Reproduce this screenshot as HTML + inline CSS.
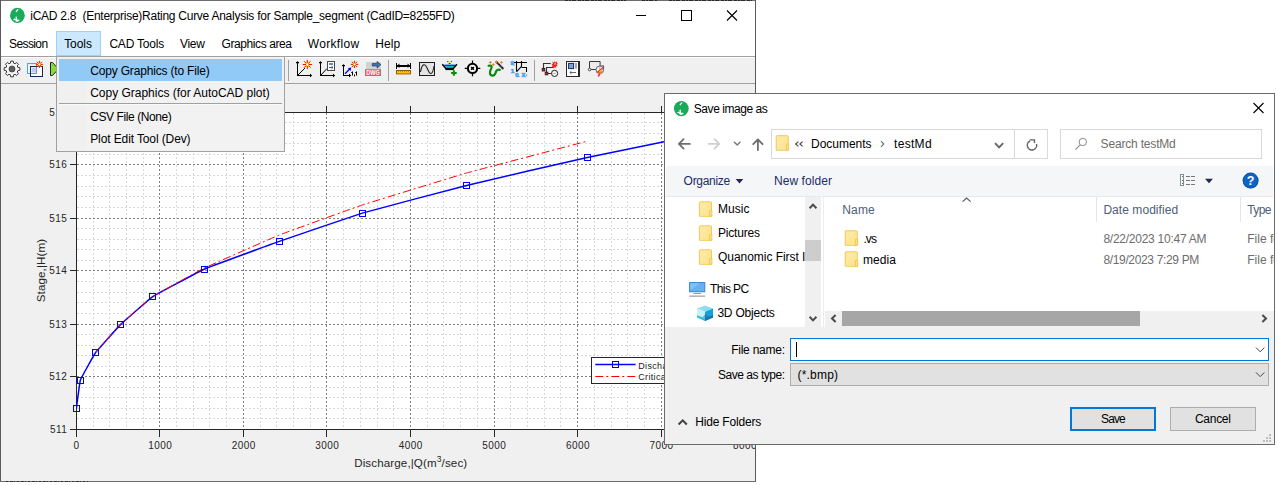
<!DOCTYPE html>
<html><head><meta charset="utf-8"><title>iCAD</title>
<style>
html,body{margin:0;padding:0;background:#fff;overflow:hidden}
svg{display:block}
text{font-family:"Liberation Sans",sans-serif;white-space:pre}
</style></head><body>
<svg width="1278" height="485" viewBox="0 0 1278 485">
<defs>
<clipPath id="cw"><rect x="0" y="0" width="756" height="482"/></clipPath>
<clipPath id="cd"><rect x="664" y="93" width="611" height="352"/></clipPath>
<clipPath id="cnav"><rect x="665" y="197" width="140" height="130"/></clipPath>
<clipPath id="cax"><rect x="76" y="112" width="671" height="319"/></clipPath>
</defs>
<rect width="1278" height="485" fill="#fff"/>

<g clip-path="url(#cw)">
<rect x="0" y="0" width="756" height="482" fill="#fff"/>
<rect x="1" y="57" width="754" height="424" fill="#f0f0f0"/>
<rect x="1" y="56" width="754" height="1" fill="#a0a0a0"/>
<rect x="1" y="83" width="754" height="1" fill="#a0a0a0"/>
<rect x="76.50" y="112.50" width="668.20" height="317.00" fill="#fff"/>
<g stroke="#d8d8d8" stroke-width="1" stroke-dasharray="2 2" fill="none" shape-rendering="crispEdges">
<path d="M93.5 112.5V429.5"/>
<path d="M109.5 112.5V429.5"/>
<path d="M126.5 112.5V429.5"/>
<path d="M143.5 112.5V429.5"/>
<path d="M176.5 112.5V429.5"/>
<path d="M193.5 112.5V429.5"/>
<path d="M209.5 112.5V429.5"/>
<path d="M226.5 112.5V429.5"/>
<path d="M260.5 112.5V429.5"/>
<path d="M276.5 112.5V429.5"/>
<path d="M293.5 112.5V429.5"/>
<path d="M310.5 112.5V429.5"/>
<path d="M343.5 112.5V429.5"/>
<path d="M360.5 112.5V429.5"/>
<path d="M377.5 112.5V429.5"/>
<path d="M393.5 112.5V429.5"/>
<path d="M427.5 112.5V429.5"/>
<path d="M443.5 112.5V429.5"/>
<path d="M460.5 112.5V429.5"/>
<path d="M477.5 112.5V429.5"/>
<path d="M510.5 112.5V429.5"/>
<path d="M527.5 112.5V429.5"/>
<path d="M544.5 112.5V429.5"/>
<path d="M560.5 112.5V429.5"/>
<path d="M594.5 112.5V429.5"/>
<path d="M611.5 112.5V429.5"/>
<path d="M627.5 112.5V429.5"/>
<path d="M644.5 112.5V429.5"/>
<path d="M677.5 112.5V429.5"/>
<path d="M694.5 112.5V429.5"/>
<path d="M711.5 112.5V429.5"/>
<path d="M727.5 112.5V429.5"/>
<path d="M76.5 418.5H744.7"/>
<path d="M76.5 408.5H744.7"/>
<path d="M76.5 397.5H744.7"/>
<path d="M76.5 387.5H744.7"/>
<path d="M76.5 366.5H744.7"/>
<path d="M76.5 355.5H744.7"/>
<path d="M76.5 345.5H744.7"/>
<path d="M76.5 334.5H744.7"/>
<path d="M76.5 313.5H744.7"/>
<path d="M76.5 302.5H744.7"/>
<path d="M76.5 292.5H744.7"/>
<path d="M76.5 281.5H744.7"/>
<path d="M76.5 260.5H744.7"/>
<path d="M76.5 249.5H744.7"/>
<path d="M76.5 239.5H744.7"/>
<path d="M76.5 228.5H744.7"/>
<path d="M76.5 207.5H744.7"/>
<path d="M76.5 196.5H744.7"/>
<path d="M76.5 186.5H744.7"/>
<path d="M76.5 175.5H744.7"/>
<path d="M76.5 154.5H744.7"/>
<path d="M76.5 143.5H744.7"/>
<path d="M76.5 133.5H744.7"/>
<path d="M76.5 122.5H744.7"/>
</g>
<g stroke="#808080" stroke-width="1" stroke-dasharray="2 2" fill="none" shape-rendering="crispEdges">
<path d="M159.5 112.5V429.5"/>
<path d="M243.5 112.5V429.5"/>
<path d="M326.5 112.5V429.5"/>
<path d="M410.5 112.5V429.5"/>
<path d="M494.5 112.5V429.5"/>
<path d="M577.5 112.5V429.5"/>
<path d="M661.5 112.5V429.5"/>
<path d="M76.5 376.5H744.7"/>
<path d="M76.5 324.5H744.7"/>
<path d="M76.5 270.5H744.7"/>
<path d="M76.5 218.5H744.7"/>
<path d="M76.5 164.5H744.7"/>
</g>
<g stroke="#262626" stroke-width="1" fill="none" shape-rendering="crispEdges">
<rect x="76.5" y="112.5" width="668" height="317.0"/>
<path d="M76.5 429.5v7M76.5 112.5v-7"/>
<path d="M159.5 429.5v7M159.5 112.5v-7"/>
<path d="M243.5 429.5v7M243.5 112.5v-7"/>
<path d="M326.5 429.5v7M326.5 112.5v-7"/>
<path d="M410.5 429.5v7M410.5 112.5v-7"/>
<path d="M494.5 429.5v7M494.5 112.5v-7"/>
<path d="M577.5 429.5v7M577.5 112.5v-7"/>
<path d="M661.5 429.5v7M661.5 112.5v-7"/>
<path d="M744.5 429.5v7M744.5 112.5v-7"/>
<path d="M76.5 429.5h-7"/>
<path d="M76.5 376.5h-7"/>
<path d="M76.5 324.5h-7"/>
<path d="M76.5 270.5h-7"/>
<path d="M76.5 218.5h-7"/>
<path d="M76.5 164.5h-7"/>
<path d="M76.5 112.5h-7"/>
</g>
<g clip-path="url(#cax)">
<path fill="none" stroke="#0000ff" stroke-width="1.5" d="M76.4 408.1C76.53 407.16 79.76 381.85 80.4 380.0C81.04 378.15 94.26 354.35 95.6 352.5C96.94 350.65 118.79 326.26 120.7 324.4C122.61 322.54 150.02 298.44 152.8 296.6C155.58 294.76 199.88 271.04 204.1 269.2C208.32 267.36 274.03 243.27 279.3 241.4C284.57 239.53 356.06 214.97 362.3 213.1C368.54 211.23 459.10 187.26 466.6 185.4C474.10 183.54 578.72 159.26 587.3 157.4C595.88 155.54 719.44 130.43 724 129.5"/>
<path fill="none" stroke="#ff0000" stroke-width="1" stroke-dasharray="8 3 2 3" d="M95.6 352.6C96.44 351.66 118.79 326.27 120.7 324.4C122.61 322.53 150.02 298.37 152.8 296.5C155.58 294.63 199.88 270.25 204.1 268.2C208.32 266.15 274.03 237.11 279.3 235.0C284.57 232.89 356.06 207.07 362.3 205.0C368.54 202.93 459.08 175.13 466.6 173.0C474.12 170.87 583.95 142.07 588 141.0"/>
</g>
<rect x="73.5" y="405.5" width="6" height="6" fill="none" stroke="#0000ff" stroke-width="1" shape-rendering="crispEdges"/>
<rect x="77.5" y="377.5" width="6" height="6" fill="none" stroke="#0000ff" stroke-width="1" shape-rendering="crispEdges"/>
<rect x="92.5" y="349.5" width="6" height="6" fill="none" stroke="#0000ff" stroke-width="1" shape-rendering="crispEdges"/>
<rect x="117.5" y="321.5" width="6" height="6" fill="none" stroke="#0000ff" stroke-width="1" shape-rendering="crispEdges"/>
<rect x="149.5" y="293.5" width="6" height="6" fill="none" stroke="#0000ff" stroke-width="1" shape-rendering="crispEdges"/>
<rect x="201.5" y="266.5" width="6" height="6" fill="none" stroke="#0000ff" stroke-width="1" shape-rendering="crispEdges"/>
<rect x="276.5" y="238.5" width="6" height="6" fill="none" stroke="#0000ff" stroke-width="1" shape-rendering="crispEdges"/>
<rect x="359.5" y="210.5" width="6" height="6" fill="none" stroke="#0000ff" stroke-width="1" shape-rendering="crispEdges"/>
<rect x="463.5" y="182.5" width="6" height="6" fill="none" stroke="#0000ff" stroke-width="1" shape-rendering="crispEdges"/>
<rect x="584.5" y="154.5" width="6" height="6" fill="none" stroke="#0000ff" stroke-width="1" shape-rendering="crispEdges"/>
<rect x="591.5" y="357.5" width="140" height="26" fill="#fff" stroke="#262626" stroke-width="1" shape-rendering="crispEdges"/>
<path d="M595.3 364.5H635.6" stroke="#0000ff" stroke-width="1.3"/>
<rect x="612.5" y="361.5" width="6" height="6" fill="none" stroke="#0000ff" shape-rendering="crispEdges"/>
<path d="M595.3 376.5H635.6" stroke="#ff0000" stroke-width="1.15" stroke-dasharray="8 3 2 3"/>
<text x="638.20" y="368.60" font-size="9" fill="#1a1a1a" text-anchor="start" letter-spacing="0.35">Discharge</text>
<text x="638.20" y="379.80" font-size="9" fill="#1a1a1a" text-anchor="start" letter-spacing="0.35">Critical</text>
<text x="67.30" y="433.20" font-size="10" fill="#262626" text-anchor="end" letter-spacing="0.45">511</text>
<text x="67.30" y="380.20" font-size="10" fill="#262626" text-anchor="end" letter-spacing="0.45">512</text>
<text x="67.30" y="328.20" font-size="10" fill="#262626" text-anchor="end" letter-spacing="0.45">513</text>
<text x="67.30" y="274.20" font-size="10" fill="#262626" text-anchor="end" letter-spacing="0.45">514</text>
<text x="67.30" y="222.20" font-size="10" fill="#262626" text-anchor="end" letter-spacing="0.45">515</text>
<text x="67.30" y="168.20" font-size="10" fill="#262626" text-anchor="end" letter-spacing="0.45">516</text>
<text x="67.30" y="116.20" font-size="10" fill="#262626" text-anchor="end" letter-spacing="0.45">517</text>
<text x="76.60" y="448.50" font-size="10" fill="#262626" text-anchor="middle" letter-spacing="0.45">0</text>
<text x="160.15" y="448.50" font-size="10" fill="#262626" text-anchor="middle" letter-spacing="0.45">1000</text>
<text x="243.70" y="448.50" font-size="10" fill="#262626" text-anchor="middle" letter-spacing="0.45">2000</text>
<text x="327.25" y="448.50" font-size="10" fill="#262626" text-anchor="middle" letter-spacing="0.45">3000</text>
<text x="410.80" y="448.50" font-size="10" fill="#262626" text-anchor="middle" letter-spacing="0.45">4000</text>
<text x="494.35" y="448.50" font-size="10" fill="#262626" text-anchor="middle" letter-spacing="0.45">5000</text>
<text x="577.90" y="448.50" font-size="10" fill="#262626" text-anchor="middle" letter-spacing="0.45">6000</text>
<text x="661.45" y="448.50" font-size="10" fill="#262626" text-anchor="middle" letter-spacing="0.45">7000</text>
<text x="745.00" y="448.50" font-size="10" fill="#262626" text-anchor="middle" letter-spacing="0.45">8000</text>
<text x="354.2" y="466.6" font-size="11.6" fill="#262626" textLength="113" lengthAdjust="spacing">Discharge,|Q(m<tspan font-size="8.5" dy="-4.5">3</tspan><tspan dy="4.5">/sec)</tspan></text>
<text transform="translate(45.2 302.3) rotate(-90)" font-size="11.6" fill="#262626" textLength="63.5" lengthAdjust="spacing">Stage,|H(m)</text>
<rect x="1" y="1" width="754" height="55" fill="#fff"/>
<g transform="translate(17.4 15.4)"><ellipse rx="7.3999999999999995" ry="7.699999999999999" fill="#1ba95a"/><path d="M0.2 -6.4L1.2 -5.9L-0.9 -3.2L-1.9 -3.8Z" fill="#fff"/><path d="M-4.2 4L-2.4 2.8L-1.4 4.2L-2 1.4L-0.6 1L0 4.6L1.6 4L2.4 4.8L0.2 6.4L-1.4 6L-2.6 4.4L-3.6 5Z" fill="#fff"/></g>
<text x="30.30" y="20.00" font-size="12" fill="#000" text-anchor="start" textLength="424.50" lengthAdjust="spacing" >iCAD 2.8  (Enterprise)Rating Curve Analysis for Sample_segment (CadID=8255FD)</text>
<g stroke="#000" stroke-width="1" fill="none" shape-rendering="crispEdges"><path d="M636 15.5h10"/><rect x="681.5" y="10.5" width="10" height="10"/></g>
<path d="M727 10.5l10 10M737 10.5l-10 10" stroke="#000" stroke-width="1.1" fill="none"/>
<rect x="56.5" y="31.5" width="44" height="24" fill="#cce8ff" stroke="#99d1ff" shape-rendering="crispEdges"/>
<text x="9.00" y="48.00" font-size="12" fill="#000" text-anchor="start" textLength="39.10" lengthAdjust="spacing" >Session</text>
<text x="64.20" y="48.00" font-size="12" fill="#000" text-anchor="start" textLength="27.70" lengthAdjust="spacing" >Tools</text>
<text x="109.40" y="48.00" font-size="12" fill="#000" text-anchor="start" textLength="54.80" lengthAdjust="spacing" >CAD Tools</text>
<text x="180.00" y="48.00" font-size="12" fill="#000" text-anchor="start" textLength="24.80" lengthAdjust="spacing" >View</text>
<text x="221.60" y="48.00" font-size="12" fill="#000" text-anchor="start" textLength="70.30" lengthAdjust="spacing" >Graphics area</text>
<text x="307.70" y="48.00" font-size="12" fill="#000" text-anchor="start" textLength="51.50" lengthAdjust="spacing" >Workflow</text>
<text x="375.20" y="48.00" font-size="12" fill="#000" text-anchor="start" textLength="25.00" lengthAdjust="spacing" >Help</text>
<g fill="#a0a0a0" shape-rendering="crispEdges"><rect x="288" y="60" width="1" height="21"/><rect x="388" y="60" width="1" height="21"/><rect x="534" y="60" width="1" height="21"/></g>
<rect x="1" y="57" width="754" height="1" fill="#fff"/>
<path d="M19.90 67.75L19.90 70.25L17.90 70.56L17.27 72.06L18.47 73.70L16.70 75.47L15.06 74.27L13.56 74.90L13.25 76.90L10.75 76.90L10.44 74.90L8.94 74.27L7.30 75.47L5.53 73.70L6.73 72.06L6.10 70.56L4.10 70.25L4.10 67.75L6.10 67.44L6.73 65.94L5.53 64.30L7.30 62.53L8.94 63.73L10.44 63.10L10.75 61.10L13.25 61.10L13.56 63.10L15.06 63.73L16.70 62.53L18.47 64.30L17.27 65.94L17.90 67.44Z" fill="#f6f6f6" stroke="#3a3a3a" stroke-width="1" stroke-linejoin="round"/>
<circle cx="12" cy="69" r="3" fill="#5e5e5e" stroke="#3c3c3c" stroke-width="0.8"/>
<rect x="30.5" y="66.5" width="12" height="10" fill="#fff" stroke="#16244e" shape-rendering="crispEdges"/>
<rect x="31" y="67" width="11" height="2" fill="#16244e" opacity="0.0"/>
<rect x="31.5" y="67.5" width="5" height="5" fill="#c2c9f2"/>
<rect x="27.5" y="63.5" width="9" height="10" fill="none" stroke="#4aa3ff" shape-rendering="crispEdges"/>
<rect x="31" y="66" width="6" height="1" fill="#16244e"/><rect x="30" y="66" width="1" height="8" fill="#16244e"/>
<circle cx="39.4" cy="64.4" r="2.23" fill="#ffff00"/><path d="M40.48 64.40L43.00 64.40M40.16 65.16L41.95 66.95M39.40 65.48L39.40 68.00M38.64 65.16L36.85 66.95M38.32 64.40L35.80 64.40M38.64 63.64L36.85 61.85M39.40 63.32L39.40 60.80M40.16 63.64L41.95 61.85" stroke="#ff0000" stroke-width="0.9" fill="none"/><circle cx="39.4" cy="64.4" r="0.79" fill="#fff"/>
<path d="M50.5 62.5h2l6 6.5l-6 6.5h-2z" fill="#86dc3a" stroke="#1e2a12" stroke-width="1"/>
<g fill="#000" shape-rendering="crispEdges"><rect x="297" y="62" width="1" height="14"/><rect x="296" y="62" width="3" height="1"/><rect x="297" y="75" width="14" height="1"/><rect x="310" y="74" width="1" height="3"/></g><path d="M297.5 61l-1.6 2.2h3.2zM312.2 75.5l-2.2-1.8v3.6z" fill="#000"/>
<path d="M298 75L306 67" stroke="#000" stroke-width="1"/>
<circle cx="307.3" cy="64.5" r="4.6" fill="#e6fbfb"/><circle cx="307.3" cy="64.5" r="2.85" fill="#ffff00"/><path d="M308.68 64.50L311.90 64.50M308.28 65.48L310.55 67.75M307.30 65.88L307.30 69.10M306.32 65.48L304.05 67.75M305.92 64.50L302.70 64.50M306.32 63.52L304.05 61.25M307.30 63.12L307.30 59.90M308.28 63.52L310.55 61.25" stroke="#ff0000" stroke-width="1.0" fill="none"/><circle cx="307.3" cy="64.5" r="1.01" fill="#fff"/>
<g fill="#000" shape-rendering="crispEdges"><rect x="320" y="62" width="1" height="14"/><rect x="319" y="62" width="3" height="1"/><rect x="320" y="75" width="14" height="1"/><rect x="333" y="74" width="1" height="3"/></g><path d="M320.5 61l-1.6 2.2h3.2zM335.2 75.5l-2.2-1.8v3.6z" fill="#000"/>
<path d="M321 75L327 68.5" stroke="#000" stroke-width="1"/>
<rect x="327.5" y="61.5" width="7" height="9" fill="#fff" stroke="#4a4a4a" shape-rendering="crispEdges"/>
<rect x="329" y="63" width="4" height="2" fill="#5d8dd2"/>
<path d="M329 67.5h3.6M331.4 66l1.6 1.5l-1.6 1.5" stroke="#333" stroke-width="0.8" fill="none"/>
<g fill="#000" shape-rendering="crispEdges"><rect x="343" y="65" width="1" height="11"/><rect x="342" y="65" width="3" height="1"/><rect x="343" y="75" width="7" height="1"/><rect x="349" y="74" width="1" height="3"/></g><path d="M343.5 64l-1.6 2.2h3.2zM351.2 75.5l-2.2-1.8v3.6z" fill="#000"/>
<path d="M345 73.8L350 68.8" stroke="#0000ff" stroke-width="1.3"/><path d="M351.2 67.6l-3.4 0.6l2.8 2.8z" fill="#0000ff"/>
<circle cx="354.5" cy="64.4" r="3.7" fill="#b9f1f7"/><circle cx="354.5" cy="64.4" r="2.29" fill="#ffff00"/><path d="M355.61 64.40L358.20 64.40M355.28 65.18L357.12 67.02M354.50 65.51L354.50 68.10M353.72 65.18L351.88 67.02M353.39 64.40L350.80 64.40M353.72 63.62L351.88 61.78M354.50 63.29L354.50 60.70M355.28 63.62L357.12 61.78" stroke="#ff0000" stroke-width="0.9" fill="none"/><circle cx="354.5" cy="64.4" r="0.81" fill="#fff"/>
<g fill="#000"><rect x="352" y="71.5" width="1" height="4"/><rect x="351.3" y="72" width="1" height="1"/><rect x="356" y="71.5" width="1" height="4"/><rect x="355.3" y="72" width="1" height="1"/><path d="M354 74.6h1v1.2l-1 1.2z"/></g>
<rect x="366" y="62" width="15" height="7" fill="#d2d2d2"/>
<path d="M372.3 63.4h4.8v-2l3.8 3.3l-3.8 3.3v-2h-4.8z" fill="#3f74b4" stroke="#1d3a66" stroke-width="0.7"/>
<rect x="365" y="69.2" width="16" height="6.8" fill="#e2566a"/>
<text x="373" y="75.2" font-size="6.6" font-weight="bold" fill="#fff" text-anchor="middle" textLength="13.6" lengthAdjust="spacingAndGlyphs">DWG</text>
<g fill="#000" shape-rendering="crispEdges"><rect x="396" y="63" width="1" height="6"/><rect x="410" y="63" width="1" height="6"/><rect x="397" y="65" width="13" height="1.5"/></g>
<path d="M397 65.8l2.4-2.2v4.4zM410 65.8l-2.4-2.2v4.4z" fill="#000"/>
<rect x="396.5" y="70.5" width="14" height="3.4" fill="#ffc61a" stroke="#9c5a00" stroke-width="1"/>
<path d="M398.5 71v1.2M400.5 71v1.2M402.5 71v1.2M404.5 71v1.2M406.5 71v1.2M408.5 71v1.2" stroke="#b37400" stroke-width="0.7"/>
<rect x="419.5" y="62.5" width="15" height="13" fill="#e4e4e4" stroke="#1c1c1c" shape-rendering="crispEdges"/>
<path d="M420.5 72C422 63 425 63 427.5 69S432.5 76 434 66" stroke="#222" stroke-width="1.1" fill="none"/>
<path d="M444.6 65.2h10.2l-2 2.8h-6.2z" fill="#00b4d8"/><rect x="444.4" y="64.6" width="10.6" height="1.4" fill="#0038ff"/>
<path d="M442.3 64.2l4 4.8h6.6l4-4.8" stroke="#000" stroke-width="1.5" fill="none"/><path d="M445.6 69h8" stroke="#000" stroke-width="2.2"/>
<path d="M448.4 61.2l1.2 1.4l1.2-1.4M449.6 62.4v1.8" stroke="#ffee00" stroke-width="1.2" fill="none"/><circle cx="447.7" cy="61.6" r="0.7" fill="#0030ff"/><circle cx="451.5" cy="61.6" r="0.7" fill="#0030ff"/><path d="M448.6 63.6h2" stroke="#0030ff" stroke-width="1"/>
<path d="M453.9 70v6M450.9 73h6" stroke="#e9f25a" stroke-width="2.6" opacity="0.6"/><path d="M453.9 70.2v5.6M451.1 73h5.6" stroke="#0b8a0b" stroke-width="1.9"/>
<circle cx="472.5" cy="68.4" r="4.6" fill="#fafafa" stroke="#000" stroke-width="2.1"/>
<path d="M472.5 60.6v3M472.5 73.2v3M464.7 68.4h3M477.3 68.4h3" stroke="#000" stroke-width="1.2"/>
<path d="M471.1 67l2.8 2.8M473.9 67l-2.8 2.8" stroke="#000" stroke-width="1.6"/>
<path d="M488.6 65.8C491.6 65 492.4 66.6 491 69C489.2 72 489.6 75.6 492.6 75.6C495.6 75.6 495.4 72.4 496.4 70.8C497.2 69.6 498.6 69.6 499.8 69.8" stroke="#0a8a0a" stroke-width="2.2" fill="none" stroke-linecap="round"/>
<path d="M490.3 60.8l0.6 1l1 0.6l-1 0.6l-0.6 1l-0.6-1l-1-0.6l1-0.6z" fill="#e07a1a"/>
<path d="M493.4 62.99999999999999l0.6 1l1 0.6l-1 0.6l-0.6 1l-0.6-1l-1-0.6l1-0.6z" fill="#e07a1a"/>
<path d="M501.4 60.8l0.6 1l1 0.6l-1 0.6l-0.6 1l-0.6-1l-1-0.6l1-0.6z" fill="#e07a1a"/>
<path d="M496.6 62.2L503.4 69" stroke="#111" stroke-width="1.9"/><path d="M497.6 63.2L503.2 68.8" stroke="#fff" stroke-width="0.6" stroke-dasharray="0.7 0.7"/><circle cx="496.5" cy="62.1" r="1" fill="#ffe400" stroke="#8a1010" stroke-width="0.6"/>
<path d="M516.5 61v10.8M514 62.5h13M521.5 61v5.4L516.7 71.6M521.6 67.5h5.4M526.5 67.5v4.6" stroke="#000" stroke-width="1.1" fill="none"/>
<g font-size="6" font-weight="bold" fill="#3d9eff" stroke="#3d9eff" stroke-width="0.5"><text x="510.6" y="65.4">9</text><text x="510.8" y="72.8">1</text><text x="515.2" y="77.4">0</text><text x="521.6" y="77" font-size="7">x</text></g>
<g fill="#8a8a8a" opacity="0.7"><rect x="513.2" y="64.4" width="1.6" height="1.2"/><rect x="513.4" y="71.8" width="1.4" height="1"/><rect x="518" y="76" width="1.8" height="1"/><rect x="526" y="74" width="1.2" height="2.4"/></g>
<path d="M543.5 69v-5.5h7.2M546.5 73v-5.5h6.6M547.5 73.5h4" stroke="#333" stroke-width="1.1" fill="none"/>
<rect x="542.2" y="68.4" width="2.6" height="2.6" fill="#ff1010" stroke="#222" stroke-width="0.9"/><rect x="545.2" y="72.2" width="2.6" height="2.6" fill="#ff1010" stroke="#222" stroke-width="0.9"/>
<circle cx="554.6" cy="73.4" r="3.1" fill="#f4f4f4" stroke="#222" stroke-width="1"/><path d="M552.6 73.4h3.4" stroke="#bbb" stroke-width="1"/>
<path d="M552.2 61.4l1.4 1l1-1.2l0.8 1.2l1.8-1.2l-0.4 1.8l1.2 0.8l-1.4 0.8l1 1.4l-1.6 0.2l0.2 1.6l-1.6-0.6l-1 1.4l-0.6-1.6l-1.2 0.2l0.8-1.6l-1-1l1.4-0.8z" fill="#ff1a1a"/><path d="M554.4 62.8l0.8 1.6M555.8 63l-1.4 2.2" stroke="#fff" stroke-width="0.5"/>
<rect x="566.5" y="61.5" width="13" height="15" fill="#fff" stroke="#2a2a2a" shape-rendering="crispEdges"/><rect x="578" y="61" width="2" height="16" fill="#2a2a2a"/>
<rect x="568.6" y="63.4" width="5" height="5.2" fill="#7ea2da" stroke="#182c66" stroke-width="1"/>
<rect x="575" y="63" width="2" height="5.6" fill="#a8a8a8"/>
<path d="M570 72.5h6M571.4 71.2l-1.6 1.3l1.6 1.3" stroke="#555" stroke-width="0.9" fill="none"/>
<path d="M589.5 68.4v-6.9h10.6v5" stroke="#3a3a3a" stroke-width="1" fill="#ececec"/><path d="M590.6 69.5h5.4" stroke="#3a3a3a" stroke-width="1"/>
<circle cx="589.6" cy="69.5" r="1.3" fill="#fff" stroke="#333" stroke-width="0.9"/>
<circle cx="599.8" cy="69.8" r="3.8" fill="#f2f2f2" stroke="#666" stroke-width="1"/><path d="M599.8 66.4v3.4" stroke="#999" stroke-width="0.8"/><path d="M601.4 65.8h2.2v3" stroke="#444" stroke-width="0.9" fill="none"/>
<path d="M602.6 68.4l-4.2 3.4h2.8l-3 4.6" stroke="#ff1a1a" stroke-width="1.6" fill="none"/><path d="M601.8 69.4l-2.6 2.2h2.4l-1.8 2.6" stroke="#ffe100" stroke-width="0.8" fill="none"/>
<rect x="56.5" y="56.5" width="228" height="95" fill="#f2f2f2" stroke="#a0a0a0" shape-rendering="crispEdges"/>
<rect x="57" y="57" width="29.6" height="94" fill="#f0f0f0"/>
<rect x="59" y="59" width="223" height="22" fill="#91c9f7"/>
<rect x="59" y="103" width="223" height="1" fill="#a0a0a0"/><rect x="59" y="104" width="223" height="1" fill="#fafafa"/>
<text x="90.20" y="74.60" font-size="12" fill="#000" text-anchor="start" textLength="119.50" lengthAdjust="spacing" >Copy Graphics (to File)</text>
<text x="90.20" y="96.60" font-size="12" fill="#000" text-anchor="start" textLength="179.60" lengthAdjust="spacing" >Copy Graphics (for AutoCAD plot)</text>
<text x="90.20" y="120.70" font-size="12" fill="#000" text-anchor="start" textLength="81.60" lengthAdjust="spacing" >CSV File (None)</text>
<text x="90.20" y="142.60" font-size="12" fill="#000" text-anchor="start" textLength="100.40" lengthAdjust="spacing" >Plot Edit Tool (Dev)</text>
<rect x="0" y="0" width="756" height="1" fill="#6d6d6d"/><rect x="0" y="0" width="1" height="482" fill="#5a5a5a"/><rect x="755" y="0" width="1" height="482" fill="#5a5a5a"/><rect x="0" y="481" width="756" height="1" fill="#6d6d6d"/>
<path d="M565 0.5H626M642 0.5H657M669 0.5H752" stroke="#2a2a2a" stroke-dasharray="3 1 2 1 4 2" shape-rendering="crispEdges"/>
<path d="M6 481.5H88" stroke="#333" stroke-dasharray="2 2 3 1 1 2" shape-rendering="crispEdges"/>
</g>
<g clip-path="url(#cd)">
<rect x="664" y="93" width="611" height="352" fill="#fff"/>
<g transform="translate(681.3 108.6)"><ellipse rx="7.3999999999999995" ry="7.699999999999999" fill="#1ba95a"/><path d="M0.2 -6.4L1.2 -5.9L-0.9 -3.2L-1.9 -3.8Z" fill="#fff"/><path d="M-4.2 4L-2.4 2.8L-1.4 4.2L-2 1.4L-0.6 1L0 4.6L1.6 4L2.4 4.8L0.2 6.4L-1.4 6L-2.6 4.4L-3.6 5Z" fill="#fff"/></g>
<text x="693.80" y="113.00" font-size="12" fill="#000" text-anchor="start" textLength="74.00" lengthAdjust="spacing" >Save image as</text>
<path d="M1253.5 103l10 10M1263.5 103l-10 10" stroke="#000" stroke-width="1.1" fill="none"/>
<g stroke="#6e6e6e" stroke-width="1.8" fill="none" stroke-linecap="round" stroke-linejoin="round"><path d="M679 143.9H689.8M683.6 139.2L678.9 143.9L683.6 148.6"/></g>
<g stroke="#cfcfcf" stroke-width="1.8" fill="none" stroke-linecap="round" stroke-linejoin="round"><path d="M708.6 143.9H719.2M714.6 139.2L719.3 143.9L714.6 148.6"/></g>
<path d="M734.4 142.2l2.8 2.8l2.8-2.8" stroke="#7a7a7a" stroke-width="1.5" fill="none" stroke-linecap="round" stroke-linejoin="round"/>
<g stroke="#6e6e6e" stroke-width="1.8" fill="none" stroke-linecap="round" stroke-linejoin="round"><path d="M757.9 139.6V150M753.2 144.2L757.9 139.5L762.6 144.2"/></g>
<rect x="771.5" y="129.5" width="276" height="29" fill="#fff" stroke="#d9d9d9" shape-rendering="crispEdges"/>
<rect x="1014" y="130" width="1" height="28" fill="#d9d9d9"/>
<g transform="translate(775.6 135.2)"><path d="M0.6 1.3Q0.6 0.5 1.4 0.5H11.8Q12.7 0.5 12.7 1.4V15H0.6Z" fill="#ffe9a2" stroke="#eec24e" stroke-width="0.9"/><path d="M1.4 14.2L10.2 1.2H11.9V14.2Z" fill="#ffe38c" opacity="0.55"/><path d="M10.7 9.4Q10.7 8.9 11.2 8.9H12.6Q13.1 8.9 13.1 9.4V15H10.7Z" fill="#fde089" stroke="#eec24e" stroke-width="0.8"/></g>
<path d="M798.4 141.6l-2.7 2.4l2.7 2.4M802.6 141.6l-2.7 2.4l2.7 2.4" stroke="#4a4a4a" stroke-width="1.2" fill="none"/>
<text x="811.00" y="148.00" font-size="12" fill="#000" text-anchor="start" textLength="60.60" lengthAdjust="spacing" >Documents</text>
<path d="M881 141.2l2.8 2.8l-2.8 2.8" stroke="#6a6a6a" stroke-width="1.1" fill="none"/>
<text x="894.00" y="148.00" font-size="12" fill="#000" text-anchor="start" textLength="37.60" lengthAdjust="spacing" >testMd</text>
<path d="M995 143.2l4.1 4.1l4.1-4.1" stroke="#666" stroke-width="1.9" fill="none"/>
<path d="M1036.5 144A4.7 4.7 0 1 1 1030 141" stroke="#666" stroke-width="1.5" fill="none"/><path d="M1029.6 139.9h4.9v3.2" stroke="#666" stroke-width="1.4" fill="none"/>
<rect x="1060.5" y="129.5" width="201" height="29" fill="#fff" stroke="#d9d9d9" shape-rendering="crispEdges"/>
<circle cx="1082.8" cy="142" r="3.7" stroke="#8a8a8a" stroke-width="1" fill="none"/><path d="M1080.2 144.8l-4.8 4.8" stroke="#8a8a8a" stroke-width="1.1"/>
<text x="1100.60" y="148.00" font-size="12" fill="#6d6d6d" text-anchor="start" textLength="75.20" lengthAdjust="spacing" >Search testMd</text>
<rect x="666" y="166" width="607" height="30" fill="#f5f6f7"/><rect x="666" y="196" width="607" height="1" fill="#e8e9ea"/>
<text x="683.60" y="184.70" font-size="12" fill="#1a2c6a" text-anchor="start" textLength="46.60" lengthAdjust="spacing" >Organize</text>
<path d="M735.7 179.1h7.6l-3.8 4.3z" fill="#1e2b4f"/>
<text x="774.00" y="184.70" font-size="12" fill="#1a2c6a" text-anchor="start" textLength="58.00" lengthAdjust="spacing" >New folder</text>
<g shape-rendering="crispEdges"><rect x="1180.5" y="174.5" width="3" height="11" fill="#fff" stroke="#8a8a8a"/><rect x="1181.5" y="176" width="1" height="1" fill="#3b78c4"/><rect x="1181.5" y="179.5" width="1" height="1" fill="#3b78c4"/><rect x="1181.5" y="183" width="1" height="1" fill="#d03030"/><g fill="#777"><rect x="1186" y="176" width="4" height="1"/><rect x="1191" y="176" width="4" height="1"/><rect x="1186" y="180" width="4" height="1"/><rect x="1191" y="180" width="4" height="1"/><rect x="1186" y="184" width="4" height="1"/><rect x="1191" y="184" width="4" height="1"/></g></g>
<path d="M1205 178.8h8l-4 4.4z" fill="#1e2b4f"/>
<circle cx="1250.6" cy="180.6" r="8" fill="#0e63c4"/><circle cx="1250.6" cy="180.6" r="7.3" fill="none" stroke="#0a4e9e" stroke-width="0.6"/>
<text x="1250.6" y="185.2" font-size="12.5" font-weight="bold" fill="#fff" text-anchor="middle">?</text>
<g clip-path="url(#cnav)">
<g transform="translate(698.8 201.3)"><path d="M0.6 1.3Q0.6 0.5 1.4 0.5H11.8Q12.7 0.5 12.7 1.4V15H0.6Z" fill="#ffe9a2" stroke="#eec24e" stroke-width="0.9"/><path d="M1.4 14.2L10.2 1.2H11.9V14.2Z" fill="#ffe38c" opacity="0.55"/><path d="M10.7 9.4Q10.7 8.9 11.2 8.9H12.6Q13.1 8.9 13.1 9.4V15H10.7Z" fill="#fde089" stroke="#eec24e" stroke-width="0.8"/></g>
<text x="718.00" y="213.00" font-size="12" fill="#000" text-anchor="start" textLength="31.40" lengthAdjust="spacing" >Music</text>
<g transform="translate(698.8 225.3)"><path d="M0.6 1.3Q0.6 0.5 1.4 0.5H11.8Q12.7 0.5 12.7 1.4V15H0.6Z" fill="#ffe9a2" stroke="#eec24e" stroke-width="0.9"/><path d="M1.4 14.2L10.2 1.2H11.9V14.2Z" fill="#ffe38c" opacity="0.55"/><path d="M10.7 9.4Q10.7 8.9 11.2 8.9H12.6Q13.1 8.9 13.1 9.4V15H10.7Z" fill="#fde089" stroke="#eec24e" stroke-width="0.8"/></g>
<text x="718.00" y="237.00" font-size="12" fill="#000" text-anchor="start" textLength="41.90" lengthAdjust="spacing" >Pictures</text>
<g transform="translate(698.8 249.3)"><path d="M0.6 1.3Q0.6 0.5 1.4 0.5H11.8Q12.7 0.5 12.7 1.4V15H0.6Z" fill="#ffe9a2" stroke="#eec24e" stroke-width="0.9"/><path d="M1.4 14.2L10.2 1.2H11.9V14.2Z" fill="#ffe38c" opacity="0.55"/><path d="M10.7 9.4Q10.7 8.9 11.2 8.9H12.6Q13.1 8.9 13.1 9.4V15H10.7Z" fill="#fde089" stroke="#eec24e" stroke-width="0.8"/></g>
<text x="718.00" y="261.00" font-size="12" fill="#000" text-anchor="start" textLength="100.00" lengthAdjust="spacing" >Quanomic First Inc</text>
<g><rect x="689.6" y="282.6" width="15.2" height="9.2" fill="#62b2ee" stroke="#2e7fc4" stroke-width="0.9"/><path d="M690.2 283.2h9.5l-9.5 7z" fill="#8ccaf5" opacity="0.7"/><rect x="693.4" y="293.1" width="7.6" height="0.9" fill="#8a8f94"/><rect x="689.2" y="295.5" width="16" height="1.3" fill="#a2a6aa"/></g>
<text x="710.00" y="292.60" font-size="12" fill="#000" text-anchor="start" textLength="39.10" lengthAdjust="spacing" >This PC</text>
<g><path d="M697 308.6L705 305.4L713 308.6L705 311.8Z" fill="#8fdcee"/><path d="M697 308.6L705 311.8V320.9L697 317.6Z" fill="#c8f0f7"/><path d="M713 308.6L705 311.8V320.9L713 317.6Z" fill="#14a2d6"/><path d="M697 315.2L705 318.2V320.9L697 317.6Z" fill="#39bcd6"/><path d="M713 315.2L705 318.2V320.9L713 317.6Z" fill="#1674b4"/><path d="M705 314.5L709.5 316.4L705 318.3L702.6 317.2Z" fill="#1a6fae" opacity="0.55"/></g>
<text x="717.40" y="317.00" font-size="12" fill="#000" text-anchor="start" textLength="57.40" lengthAdjust="spacing" >3D Objects</text>
</g>
<rect x="805" y="197" width="16" height="130" fill="#f0f0f0"/>
<rect x="805" y="240" width="16" height="21" fill="#cdcdcd"/>
<path d="M809.6 208.2l3.4-3.6l3.4 3.6" stroke="#4a4a4a" stroke-width="2" fill="none"/>
<path d="M809.6 316.8l3.4 3.6l3.4-3.6" stroke="#4a4a4a" stroke-width="2" fill="none"/>
<rect x="823" y="197" width="1" height="130" fill="#ededed"/>
<path d="M962.6 201.7l4-3.7l4 3.7" stroke="#555" stroke-width="1.1" fill="none"/>
<text x="842.20" y="214.00" font-size="12" fill="#4c607a" text-anchor="start" textLength="32.60" lengthAdjust="spacing" >Name</text>
<rect x="1096" y="197" width="1" height="25" fill="#e5e5e5"/><rect x="1240" y="197" width="1" height="25" fill="#e5e5e5"/>
<text x="1103.40" y="214.00" font-size="12" fill="#4c607a" text-anchor="start" textLength="74.70" lengthAdjust="spacing" >Date modified</text>
<text x="1247.20" y="214.00" font-size="12" fill="#4c607a" text-anchor="start" textLength="24.20" lengthAdjust="spacing" >Type</text>
<g transform="translate(844.6 230.3)"><path d="M0.6 1.3Q0.6 0.5 1.4 0.5H11.8Q12.7 0.5 12.7 1.4V15H0.6Z" fill="#ffe9a2" stroke="#eec24e" stroke-width="0.9"/><path d="M1.4 14.2L10.2 1.2H11.9V14.2Z" fill="#ffe38c" opacity="0.55"/><path d="M10.7 9.4Q10.7 8.9 11.2 8.9H12.6Q13.1 8.9 13.1 9.4V15H10.7Z" fill="#fde089" stroke="#eec24e" stroke-width="0.8"/></g>
<text x="863.40" y="243.20" font-size="12" fill="#000" text-anchor="start" textLength="13.60" lengthAdjust="spacing" >.vs</text>
<g transform="translate(844.6 251.3)"><path d="M0.6 1.3Q0.6 0.5 1.4 0.5H11.8Q12.7 0.5 12.7 1.4V15H0.6Z" fill="#ffe9a2" stroke="#eec24e" stroke-width="0.9"/><path d="M1.4 14.2L10.2 1.2H11.9V14.2Z" fill="#ffe38c" opacity="0.55"/><path d="M10.7 9.4Q10.7 8.9 11.2 8.9H12.6Q13.1 8.9 13.1 9.4V15H10.7Z" fill="#fde089" stroke="#eec24e" stroke-width="0.8"/></g>
<text x="863.00" y="264.00" font-size="12" fill="#000" text-anchor="start" textLength="32.90" lengthAdjust="spacing" >media</text>
<text x="1103.40" y="243.20" font-size="12" fill="#6d6d6d" text-anchor="start" textLength="103.10" lengthAdjust="spacing" >8/22/2023 10:47 AM</text>
<text x="1103.40" y="264.00" font-size="12" fill="#6d6d6d" text-anchor="start" textLength="95.90" lengthAdjust="spacing" >8/19/2023 7:29 PM</text>
<text x="1247.20" y="243.20" font-size="12" fill="#6d6d6d" text-anchor="start" textLength="52.80" lengthAdjust="spacing" >File folder</text>
<text x="1247.20" y="264.00" font-size="12" fill="#6d6d6d" text-anchor="start" textLength="52.80" lengthAdjust="spacing" >File folder</text>
<rect x="825" y="311" width="449" height="16" fill="#f0f0f0"/>
<rect x="842" y="311" width="298" height="15" fill="#a6a6a6"/>
<path d="M835.6 315.1l-3.6 3.4l3.6 3.4" stroke="#4a4a4a" stroke-width="2" fill="none"/>
<path d="M1262.4 315.1l3.6 3.4l-3.6 3.4" stroke="#4a4a4a" stroke-width="2" fill="none"/>
<rect x="665" y="327" width="609" height="117" fill="#f0f0f0"/>
<text x="731.20" y="354.10" font-size="12" fill="#000" text-anchor="start" textLength="53.80" lengthAdjust="spacing" >File name:</text>
<rect x="790.5" y="338.5" width="478" height="22" fill="#fff" stroke="#0078d7" shape-rendering="crispEdges"/>
<rect x="796" y="342" width="1" height="15" fill="#000"/>
<path d="M1256 347.6l4.2 4.2l4.2-4.2" stroke="#444" stroke-width="1" fill="none"/>
<text x="718.00" y="378.60" font-size="12" fill="#000" text-anchor="start" textLength="67.00" lengthAdjust="spacing" >Save as type:</text>
<rect x="790.5" y="363.5" width="478" height="22" fill="#e1e1e1" stroke="#adadad" shape-rendering="crispEdges"/>
<text x="797.60" y="378.60" font-size="12" fill="#000" text-anchor="start" textLength="40.40" lengthAdjust="spacing" >(*.bmp)</text>
<path d="M1256 372.4l4.2 4.2l4.2-4.2" stroke="#444" stroke-width="1" fill="none"/>
<path d="M678.6 424.5l4.1-4.1l4.1 4.1" stroke="#404040" stroke-width="2" fill="none"/>
<text x="695.20" y="426.00" font-size="12" fill="#000" text-anchor="start" textLength="66.10" lengthAdjust="spacing" >Hide Folders</text>
<rect x="1071" y="408" width="84" height="22" fill="#e1e1e1" stroke="#0078d7" stroke-width="2" shape-rendering="crispEdges"/>
<text x="1101.00" y="423.00" font-size="12" fill="#000" text-anchor="start" textLength="24.80" lengthAdjust="spacing" >Save</text>
<rect x="1170.5" y="407.5" width="85" height="23" fill="#e1e1e1" stroke="#adadad" shape-rendering="crispEdges"/>
<text x="1195.00" y="423.00" font-size="12" fill="#000" text-anchor="start" textLength="35.90" lengthAdjust="spacing" >Cancel</text>
<g fill="#bdbdbd" shape-rendering="crispEdges"><rect x="1269" y="434" width="2" height="2"/><rect x="1269" y="437" width="2" height="2"/><rect x="1266" y="437" width="2" height="2"/><rect x="1269" y="440" width="2" height="2"/><rect x="1266" y="440" width="2" height="2"/><rect x="1263" y="440" width="2" height="2"/></g>
</g>
<rect x="664.5" y="93.5" width="610" height="351" fill="none" stroke="#6a6a6a" shape-rendering="crispEdges"/>
</svg></body></html>
